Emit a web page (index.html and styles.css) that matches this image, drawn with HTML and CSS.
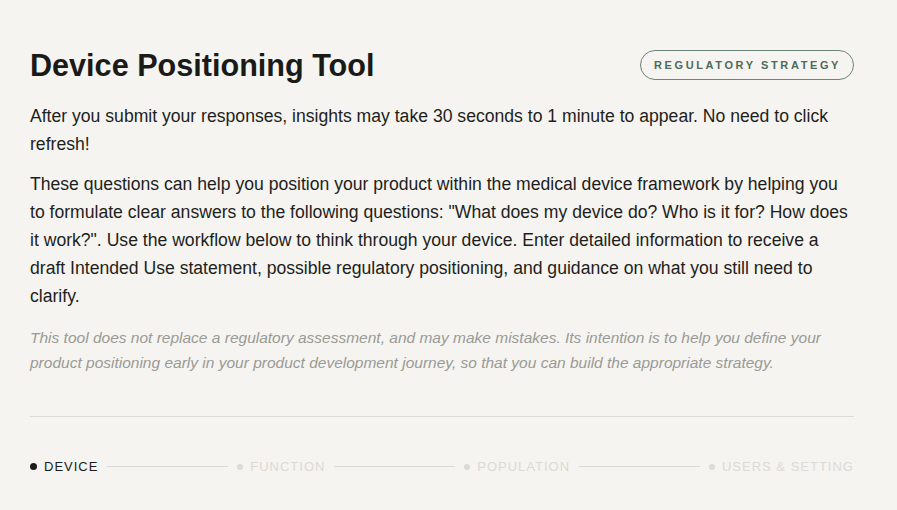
FILE: index.html
```html
<!DOCTYPE html>
<html>
<head>
<meta charset="utf-8">
<link rel="stylesheet" href="styles.css">
</head>
<body>
<main class="page">
  <header class="head">
    <h1 class="title">Device Positioning Tool</h1>
    <span class="badge">REGULATORY STRATEGY</span>
  </header>
  <p class="text">After you submit your responses, insights may take 30 seconds to 1 minute to appear. No need to click refresh!</p>
  <p class="text">These questions can help you position your product within the medical device framework by helping you to formulate clear answers to the following questions: "What does my device do? Who is it for? How does it work?". Use the workflow below to think through your device. Enter detailed information to receive a draft Intended Use statement, possible regulatory positioning, and guidance on what you still need to clarify.</p>
  <p class="note">This tool does not replace a regulatory assessment, and may make mistakes. Its intention is to help you define your product positioning early in your product development journey, so that you can build the appropriate strategy.</p>
  <hr class="rule">
  <nav class="steps">
    <span class="step active"><span class="dot"></span>DEVICE</span>
    <span class="line"></span>
    <span class="step"><span class="dot"></span>FUNCTION</span>
    <span class="line"></span>
    <span class="step"><span class="dot"></span>POPULATION</span>
    <span class="line"></span>
    <span class="step"><span class="dot"></span>USERS &amp; SETTING</span>
  </nav>
</main>
</body>
</html>
```
FILE: styles.css
```css
html, body {
  margin: 0;
  padding: 0;
  background: #f5f4f0;
}
body {
  font-family: "Liberation Sans", Arial, sans-serif;
  color: #1c1c1a;
}
.page {
  padding: 45px 43px 0 30px;
}
.head {
  display: flex;
  justify-content: space-between;
  align-items: center;
  margin-bottom: 17px;
}
.title {
  margin: 0;
  font-size: 30.6px;
  line-height: 40px;
  font-weight: 700;
  color: #1a1a18;
}
.badge {
  display: inline-block;
  border: 1px solid #6a8477;
  border-radius: 16px;
  padding: 7px 12px 7px 13px;
  font-size: 11px;
  line-height: 14px;
  font-weight: 700;
  letter-spacing: 2.6px;
  color: #4d6a5d;
}
.text {
  margin: 0 0 12px;
  font-size: 17.6px;
  line-height: 28px;
  color: #1e1e1c;
}
.note {
  margin: 15px 0 0;
  font-size: 15.5px;
  line-height: 25px;
  font-style: italic;
  color: #9a9a96;
}
.rule {
  border: 0;
  border-top: 1px solid #dddbd6;
  margin: 41px 0 0;
}
.steps {
  display: flex;
  align-items: center;
  gap: 9px;
  margin-top: 42px;
}
.step {
  display: flex;
  align-items: center;
  gap: 7px;
  font-size: 13px;
  letter-spacing: 1px;
  color: #dcdad5;
  white-space: nowrap;
}
.step .dot {
  width: 6px;
  height: 6px;
  border-radius: 50%;
  background: #dcdad5;
}
.step.active {
  color: #1c1c1a;
}
.step.active .dot {
  width: 7px;
  height: 7px;
  background: #1c1c1a;
}
.line {
  flex: 1;
  height: 1px;
  background: #dcdad5;
}
```
